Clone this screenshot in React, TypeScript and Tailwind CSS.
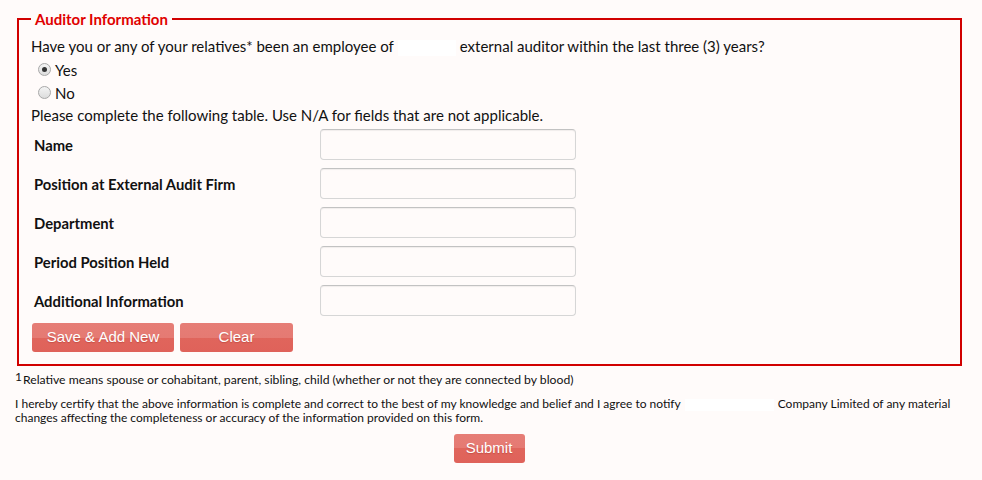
import React from "react";

const rows = [
  "Name",
  "Position at External Audit Firm",
  "Department",
  "Period Position Held",
  "Additional Information",
];

function RedButton({ label, width }: { label: string; width: string }) {
  return (
    <button
      type="button"
      className={`${width} h-[29px] rounded-[3px] bg-[linear-gradient(to_bottom,#e67d76_0%,#e57a73_50%,#e0655c_50%,#df625a_100%)] text-white text-[15px] font-['Liberation_Sans',Arial,sans-serif] [text-shadow:0_1px_1px_rgba(150,40,30,0.35)] flex items-center justify-center`}
    >
      {label}
    </button>
  );
}

function Radio({ checked, label }: { checked?: boolean; label: string }) {
  return (
    <label className="flex items-center gap-[4px] pl-[7px] h-[23px]">
      <span className="w-[13px] h-[13px] rounded-full border border-[#a8a8a8] bg-[linear-gradient(to_bottom,#f4f4f4,#dcdcdc)] flex items-center justify-center">
        {checked && <span className="w-[5px] h-[5px] rounded-full bg-[#333]" />}
      </span>
      <span>{label}</span>
    </label>
  );
}

export default function App() {
  return (
    <div className="min-h-[480px] bg-[#fffbfa] text-[#111] font-['Lato','Open_Sans',sans-serif] pt-[11px]">
      {/* Auditor Information fieldset */}
      <fieldset className="ml-[17px] w-[945px] h-[355px] border-2 border-[#d10000] px-[12px] pt-0 pb-0">
        <legend className="px-[4px] text-[#e00000] font-bold text-[15px] leading-[16px]">
          Auditor Information
        </legend>
        <div className="text-[15px] leading-[20px]">
          <p className="pt-[9px]">
            Have you or any of your relatives* been an employee of
            <span className="inline-block w-[58px] h-[16px] bg-white align-middle mx-[4px]" />
            external auditor within the last three (3) years?
          </p>
          <div className="mt-[2px]">
            <Radio checked label="Yes" />
            <Radio label="No" />
          </div>
          <p className="mt-[1px]">Please complete the following table. Use N/A for fields that are not applicable.</p>
        </div>

        <div className="mt-[4px] flex flex-col gap-[8px]">
          {rows.map((r) => (
            <div key={r} className="flex items-center">
              <span className="w-[289px] pl-[3px] font-bold text-[14.8px]">{r}</span>
              <input
                type="text"
                className="w-[256px] h-[31px] rounded-[4px] border border-[#d6d6d6] border-t-[#c2c2c2] bg-[#fffbfa] shadow-[inset_0_1px_1px_rgba(0,0,0,0.06)]"
              />
            </div>
          ))}
        </div>

        <div className="mt-[7px] flex gap-[6px] pl-[1px]">
          <RedButton label="Save & Add New" width="w-[142px]" />
          <RedButton label="Clear" width="w-[113px]" />
        </div>
      </fieldset>

      {/* Footnotes */}
      <div className="pl-[15px] pr-[10px] leading-[14px] mt-[7px]">
        <p className="text-[12.2px]">
          <sup className="text-[12px] relative top-[-3px] mr-[1px]">1</sup>Relative means spouse or cohabitant, parent, sibling, child (whether or not they are connected by blood)
        </p>
        <p className="mt-[10px] text-[12px]">
          I hereby certify that the above information is complete and correct to the best of my knowledge and belief and I agree to notify
          <span className="inline-block w-[89px] h-[12px] bg-white align-middle mx-[4px]" />
          Company Limited of any material changes affecting the completeness or accuracy of the information provided on this form.
        </p>
      </div>

      <div className="flex justify-center mt-[9px] pr-[4px]">
        <RedButton label="Submit" width="w-[71px]" />
      </div>
    </div>
  );
}
